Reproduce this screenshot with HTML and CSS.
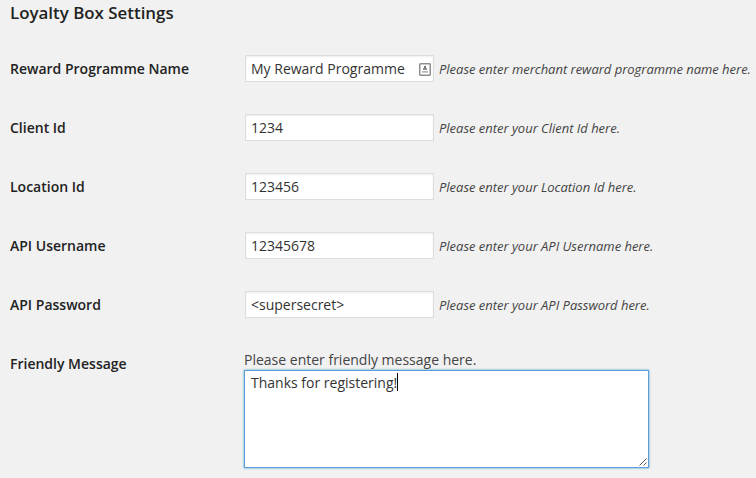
FILE: index.html
```html
<!DOCTYPE html>
<html lang="en">
<head>
<meta charset="utf-8">
<title>Loyalty Box Settings</title>
<link rel="stylesheet" href="styles.css">
</head>
<body>
<main class="settings">
  <h3 class="title">Loyalty Box Settings</h3>
  <div class="row"><div class="label">Reward Programme Name</div><div class="input"><span>My Reward Programme</span><svg class="autofill" width="12" height="13" viewBox="0 0 12 13"><rect x=".75" y=".75" width="10.5" height="11.5" rx=".7" fill="#fff" stroke="#8f8f8f" stroke-width="1.5"/><path d="M5 3h2v2H5Z" fill="#777"/><path d="M4 5h4v2H4Z" fill="#8f8f8f"/><path d="M3 8h6v1.7H3Z" fill="#b5b5b5"/></svg></div><em class="hint">Please enter merchant reward programme name here.</em></div>
  <div class="row"><div class="label">Client Id</div><div class="input"><span>1234</span></div><em class="hint">Please enter your Client Id here.</em></div>
  <div class="row"><div class="label">Location Id</div><div class="input"><span>123456</span></div><em class="hint">Please enter your Location Id here.</em></div>
  <div class="row"><div class="label">API Username</div><div class="input"><span>12345678</span></div><em class="hint">Please enter your API Username here.</em></div>
  <div class="row"><div class="label">API Password</div><div class="input"><span>&lt;supersecret&gt;</span></div><em class="hint">Please enter your API Password here.</em></div>
  <div class="message-row"><div class="label">Friendly Message</div><div class="message"><p class="prompt">Please enter friendly message here.</p><div class="textarea"><span class="typed">Thanks for registering!</span><svg class="grip" width="8" height="8" viewBox="0 0 8 8"><path d="M.5 7.5 7.5 .5M4.5 7.5l3-3" stroke="#555" fill="none"/></svg></div></div></div>
</main>
</body>
</html>
```
FILE: styles.css
```css
* { box-sizing: border-box; }
body { margin: 0; background: #f1f1f1; color: #444; font: 14px/20px "Open Sans", sans-serif; overflow: hidden; }
.settings { width: 756px; height: 478px; padding: 2px 0 0 10px; white-space: nowrap; }
.title { margin: 0 0 31px; font-size: 16.9px; line-height: 22px; font-weight: 600; color: #222; }
.row { display: flex; align-items: center; height: 28px; margin-bottom: 31px; }
.label { width: 235px; flex: none; font-weight: 600; color: #222; }
.input { display: flex; align-items: center; align-self: flex-start; justify-content: space-between; width: 189px; height: 27px; flex: none; padding: 1px 2px 0 5px; border: 1px solid #ddd; background: #fff; color: #333; box-shadow: inset 0 1px 2px rgba(0,0,0,.07); }
.autofill { flex: none; }
.hint { margin-left: 5px; font-size: 13px; letter-spacing: -.02px; color: #444; }
.message-row { display: flex; }
.message-row .label { width: 234px; padding-top: 4px; }
.prompt { margin: 0; }
.textarea { position: relative; width: 405px; height: 98px; padding: 2px 6px; border: 1px solid #5b9dd9; background: #fff; color: #333; box-shadow: 0 0 2px rgba(30,140,190,.8); }
.typed { display: inline-block; height: 18px; line-height: 20px; border-right: 1px solid #000; }
.grip { position: absolute; right: 1px; bottom: 1px; }
```
